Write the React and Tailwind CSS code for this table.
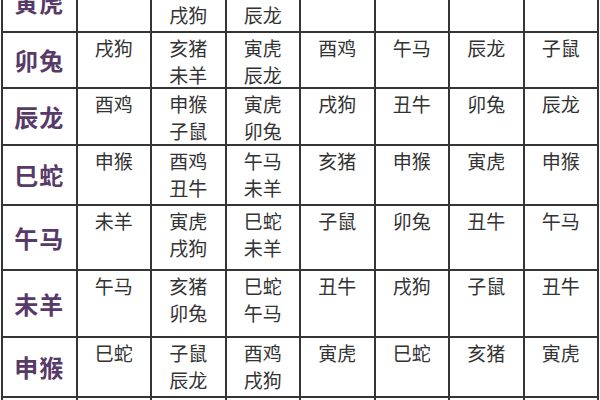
import React from "react";

const rows = [
  { name: "寅虎", cells: [["亥猪"], ["午马", "戌狗"], ["卯兔", "辰龙"], ["申猴"], ["巳蛇"], ["巳蛇"], ["亥猪"]] },
  { name: "卯兔", cells: [["戌狗"], ["亥猪", "未羊"], ["寅虎", "辰龙"], ["酉鸡"], ["午马"], ["辰龙"], ["子鼠"]] },
  { name: "辰龙", cells: [["酉鸡"], ["申猴", "子鼠"], ["寅虎", "卯兔"], ["戌狗"], ["丑牛"], ["卯兔"], ["辰龙"]] },
  { name: "巳蛇", cells: [["申猴"], ["酉鸡", "丑牛"], ["午马", "未羊"], ["亥猪"], ["申猴"], ["寅虎"], ["申猴"]] },
  { name: "午马", cells: [["未羊"], ["寅虎", "戌狗"], ["巳蛇", "未羊"], ["子鼠"], ["卯兔"], ["丑牛"], ["午马"]] },
  { name: "未羊", cells: [["午马"], ["亥猪", "卯兔"], ["巳蛇", "午马"], ["丑牛"], ["戌狗"], ["子鼠"], ["丑牛"]] },
  { name: "申猴", cells: [["巳蛇"], ["子鼠", "辰龙"], ["酉鸡", "戌狗"], ["寅虎"], ["巳蛇"], ["亥猪"], ["寅虎"]] },
  { name: "酉鸡", cells: [["辰龙"], ["巳蛇", "丑牛"], ["申猴", "戌狗"], ["卯兔"], ["酉鸡"], ["戌狗"], ["子鼠"]] },
];

export default function App() {
  return (
    <div className="w-[600px] h-[400px] overflow-hidden bg-white font-['Noto_Sans_CJK_SC',sans-serif]">
      <div className="-mt-[29px] ml-px w-[598px] grid grid-cols-8 grid-rows-[58px_54px_55px_58px_63px_65px_58px_60px] gap-[2px] p-[2px] bg-[#353535]">
        {rows.map((row) => (
          <React.Fragment key={row.name}>
            <div className="bg-white flex items-center justify-center text-[24px] font-bold text-[#573a68] tracking-[1px]">
              {row.name}
            </div>
            {row.cells.map((lines, i) => (
              <div
                key={i}
                className="bg-white flex flex-col items-center pt-px text-[19px] leading-[27px] text-[#333333]"
              >
                {lines.map((t) => (
                  <span key={t}>{t}</span>
                ))}
              </div>
            ))}
          </React.Fragment>
        ))}
      </div>
    </div>
  );
}
